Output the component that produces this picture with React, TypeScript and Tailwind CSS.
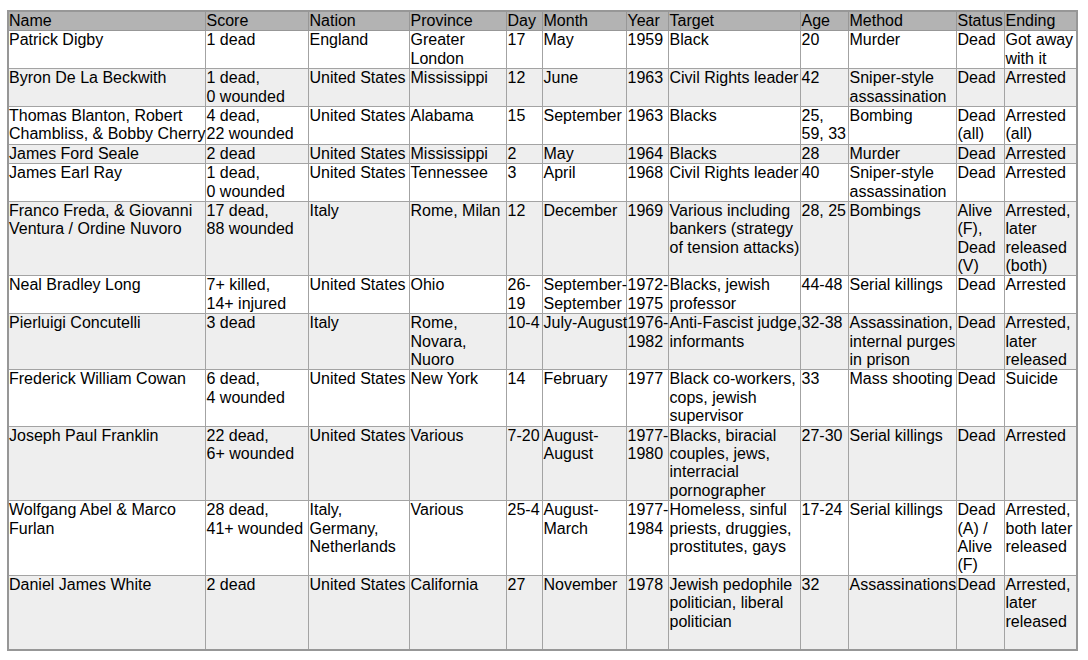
type Row = string[][];

const headers = [
  "Name",
  "Score",
  "Nation",
  "Province",
  "Day",
  "Month",
  "Year",
  "Target",
  "Age",
  "Method",
  "Status",
  "Ending",
];

const widths = [197, 103, 101, 97, 36, 84, 42, 132, 48, 108, 48, 73];

// each cell is a list of lines, matching the wrapping in the original sheet
const rows: Row[] = [
  [["Patrick Digby"], ["1 dead"], ["England"], ["Greater", "London"], ["17"], ["May"], ["1959"], ["Black"], ["20"], ["Murder"], ["Dead"], ["Got away", "with it"]],
  [["Byron De La Beckwith"], ["1 dead,", "0 wounded"], ["United States"], ["Mississippi"], ["12"], ["June"], ["1963"], ["Civil Rights leader"], ["42"], ["Sniper-style", "assassination"], ["Dead"], ["Arrested"]],
  [["Thomas Blanton, Robert", "Chambliss, & Bobby Cherry"], ["4 dead,", "22 wounded"], ["United States"], ["Alabama"], ["15"], ["September"], ["1963"], ["Blacks"], ["25,", "59, 33"], ["Bombing"], ["Dead", "(all)"], ["Arrested", "(all)"]],
  [["James Ford Seale"], ["2 dead"], ["United States"], ["Mississippi"], ["2"], ["May"], ["1964"], ["Blacks"], ["28"], ["Murder"], ["Dead"], ["Arrested"]],
  [["James Earl Ray"], ["1 dead,", "0 wounded"], ["United States"], ["Tennessee"], ["3"], ["April"], ["1968"], ["Civil Rights leader"], ["40"], ["Sniper-style", "assassination"], ["Dead"], ["Arrested"]],
  [["Franco Freda, & Giovanni", "Ventura / Ordine Nuvoro"], ["17 dead,", "88 wounded"], ["Italy"], ["Rome, Milan"], ["12"], ["December"], ["1969"], ["Various including", "bankers (strategy", "of tension attacks)"], ["28, 25"], ["Bombings"], ["Alive", "(F),", "Dead", "(V)"], ["Arrested,", "later", "released", "(both)"]],
  [["Neal Bradley Long"], ["7+ killed,", "14+ injured"], ["United States"], ["Ohio"], ["26-", "19"], ["September-", "September"], ["1972-", "1975"], ["Blacks, jewish", "professor"], ["44-48"], ["Serial killings"], ["Dead"], ["Arrested"]],
  [["Pierluigi Concutelli"], ["3 dead"], ["Italy"], ["Rome,", "Novara,", "Nuoro"], ["10-4"], ["July-August"], ["1976-", "1982"], ["Anti-Fascist judge,", "informants"], ["32-38"], ["Assassination,", "internal purges", "in prison"], ["Dead"], ["Arrested,", "later", "released"]],
  [["Frederick William Cowan"], ["6 dead,", "4 wounded"], ["United States"], ["New York"], ["14"], ["February"], ["1977"], ["Black co-workers,", "cops, jewish", "supervisor"], ["33"], ["Mass shooting"], ["Dead"], ["Suicide"]],
  [["Joseph Paul Franklin"], ["22 dead,", "6+ wounded"], ["United States"], ["Various"], ["7-20"], ["August-", "August"], ["1977-", "1980"], ["Blacks, biracial", "couples, jews,", "interracial", "pornographer"], ["27-30"], ["Serial killings"], ["Dead"], ["Arrested"]],
  [["Wolfgang Abel & Marco", "Furlan"], ["28 dead,", "41+ wounded"], ["Italy,", "Germany,", "Netherlands"], ["Various"], ["25-4"], ["August-", "March"], ["1977-", "1984"], ["Homeless, sinful", "priests, druggies,", "prostitutes, gays"], ["17-24"], ["Serial killings"], ["Dead", "(A) /", "Alive", "(F)"], ["Arrested,", "both later", "released"]],
  [["Daniel James White"], ["2 dead"], ["United States"], ["California"], ["27"], ["November"], ["1978"], ["Jewish pedophile", "politician, liberal", "politician"], ["32"], ["Assassinations"], ["Dead"], ["Arrested,", "later", "released"]],
];

function Cell({ lines, first }: { lines: string[]; first: boolean }) {
  return (
    <td
      className={
        "border border-[#a3a3a3] py-0 pr-[1px] align-top whitespace-nowrap " +
        (first ? "pl-0" : "pl-[1px]")
      }
    >
      {lines.map((line, i) => (
        <span key={i}>
          {i > 0 && <br />}
          {line}
        </span>
      ))}
    </td>
  );
}

export default function App() {
  return (
    <div
      className="min-h-[660px] bg-white pl-[7px] pt-[10px] text-[16px] leading-[1.15] text-black"
      style={{ fontFamily: '"Liberation Sans", Arial, sans-serif' }}
    >
      <table className="table-fixed border-collapse border-2 border-[#979797] w-[1069px]">
        <colgroup>
          {widths.map((w, i) => (
            <col key={i} style={{ width: w }} />
          ))}
        </colgroup>
        <thead>
          <tr className="bg-[#b3b3b3]">
            {headers.map((h, i) => (
              <th
                key={h}
                className={
                  "border border-[#979797] py-0 pr-[1px] text-left font-normal align-top whitespace-nowrap " +
                  (i === 0 ? "pl-0" : "pl-[1px]")
                }
              >
                {h}
              </th>
            ))}
          </tr>
        </thead>
        <tbody>
          {rows.map((row, r) => (
            <tr
              key={r}
              className={
                (r % 2 === 1 ? "bg-[#eeeeee]" : "bg-white") +
                (r === rows.length - 1 ? " h-[75px]" : "")
              }
            >
              {row.map((lines, c) => (
                <Cell key={c} lines={lines} first={c === 0} />
              ))}
            </tr>
          ))}
        </tbody>
      </table>
    </div>
  );
}
